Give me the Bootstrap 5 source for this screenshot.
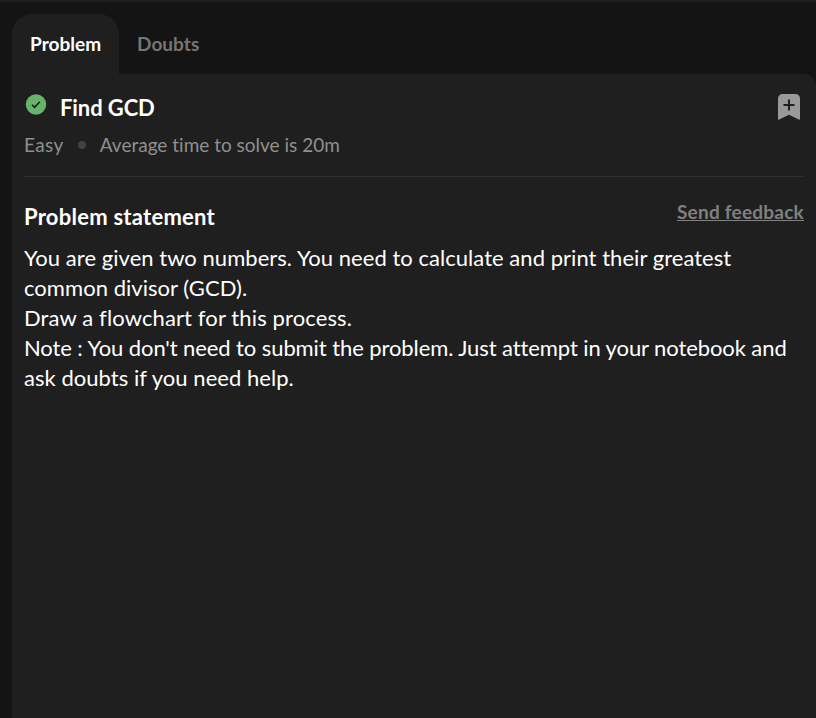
<!DOCTYPE html>
<html lang="en">
<head>
<meta charset="utf-8">
<meta name="viewport" content="width=device-width, initial-scale=1">
<title>Find GCD</title>
<link href="https://cdn.jsdelivr.net/npm/bootstrap@5.3.0/dist/css/bootstrap.min.css" rel="stylesheet">
<style>
body{background:#141414;color:#fff;font-family:Lato,"Open Sans",sans-serif;font-variant-ligatures:none;height:718px;overflow:hidden;border-top:2px solid #1f1f1f}
.shell{padding:12px 0 0 12px}
.tab-item{height:60px;line-height:58px;font-size:19px;font-weight:700;letter-spacing:.05px;padding:0 18px 1px;color:#757575;background:none;border:0}
.tab-item.active{background:#1f1f1f;color:#fff;border-radius:20px 20px 0 0;width:107px}
.panel{background:#1f1f1f;border-top-right-radius:12px;padding:19px 12px 0}
.status-icon,.save-icon{margin-top:1px}
.title{font-size:22px;font-weight:700;line-height:28px;letter-spacing:-.1px;margin:1px 0 0 12px}
.meta{font-size:19px;line-height:24px;color:#8f8f8f;margin-top:11px}
.level{letter-spacing:.4px}
.dot{width:8px;height:8px;background:#424242;margin:0 14px}
.rule{height:1px;background:#303030;margin-top:19px}
.heading{font-size:22px;font-weight:700;line-height:28px;letter-spacing:.25px;margin:2px 0 0}
.feedback{font-size:19px;font-weight:700;line-height:24px;letter-spacing:.23px;color:#808080;margin-top:-1px}
.statement{font-size:22px;line-height:30px;letter-spacing:.04px;margin-top:12px}
.statement .note{letter-spacing:-.09px}
.statement .task{letter-spacing:.12px}
</style>
</head>
<body>
<main class="shell vh-100 d-flex flex-column">
<nav class="d-flex">
<button class="tab-item active text-nowrap">Problem</button>
<button class="tab-item text-nowrap">Doubts</button>
</nav>
<section class="panel flex-grow-1">
<div class="d-flex align-items-start">
<svg class="status-icon" width="24" height="22" viewBox="0 0 24 22" aria-hidden="true"><circle cx="12" cy="10.5" r="10.2" fill="#66b36a"/><path d="M8 10.9l2.6 2.5 5.2-5.6" fill="none" stroke="#1f1f1f" stroke-width="1.6"/></svg>
<h1 class="title">Find GCD</h1>
<svg class="save-icon ms-auto" width="30" height="27" viewBox="0 0 30 27" aria-hidden="true"><path d="M8.500 0h13a4.500 4.500 0 0 1 4.500 4.500V24.700q0 1.300-1.300.8L15 20.800l-9.700 4.700Q4 26 4 24.700V4.500A4.500 4.500 0 0 1 8.500 0z" fill="#999"/><path d="M15 5.500v11M9.500 11h11" stroke="#1f1f1f" stroke-width="2"/></svg>
</div>
<div class="meta d-flex align-items-center"><span class="level">Easy</span><span class="dot rounded-circle"></span><span>Average time to solve is 20m</span></div>
<div class="rule"></div>
<div class="d-flex justify-content-between mt-4"><h2 class="heading">Problem statement</h2><a class="feedback" href="#">Send feedback</a></div>
<div class="statement">You are given two numbers. You need to calculate and print their greatest<br>common divisor (GCD).<br><span class="task">Draw a flowchart for this process.</span><br><span class="note text-nowrap">Note : You don't need to submit the problem. Just attempt in your notebook and</span><br>ask doubts if you need help.</div>
</section>
</main>
<script src="https://cdn.jsdelivr.net/npm/bootstrap@5.3.0/dist/js/bootstrap.bundle.min.js"></script>
</body>
</html>
